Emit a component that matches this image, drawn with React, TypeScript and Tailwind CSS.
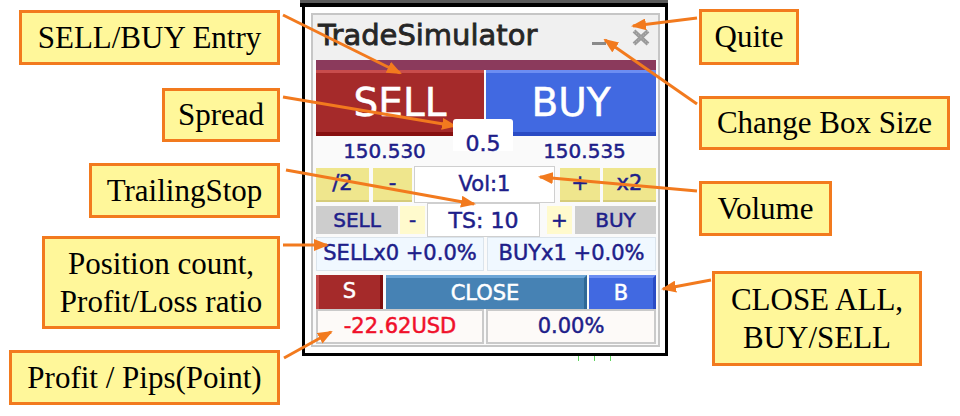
import React from 'react'

const navy = 'text-[#1e1e8a]'

interface Note {
  text: string[]
  box: string
}

const notes: Note[] = [
  { text: ['SELL/BUY Entry'], box: 'left-[19px] top-[10px] w-[261px] h-[55px]' },
  { text: ['Spread'], box: 'left-[162px] top-[88px] w-[118px] h-[54px]' },
  { text: ['TrailingStop'], box: 'left-[89px] top-[163px] w-[191px] h-[55px]' },
  { text: ['Position count,', 'Profit/Loss ratio'], box: 'left-[42px] top-[236px] w-[238px] h-[93px]' },
  { text: ['Profit / Pips(Point)'], box: 'left-[9px] top-[350px] w-[271px] h-[55px]' },
  { text: ['Quite'], box: 'left-[699px] top-[9px] w-[100px] h-[56px]' },
  { text: ['Change Box Size'], box: 'left-[699px] top-[96px] w-[251px] h-[54px]' },
  { text: ['Volume'], box: 'left-[699px] top-[181px] w-[133px] h-[55px]' },
  { text: ['CLOSE ALL,', 'BUY/SELL'], box: 'left-[712px] top-[271px] w-[210px] h-[95px]' },
]

// start x, start y, tip x, tip y
const arrows: number[][] = [
  [283, 15, 400, 73],
  [283, 97, 455, 126],
  [286, 170, 474, 204],
  [283, 245, 327, 245],
  [284, 358, 331, 332],
  [697, 18, 633, 26],
  [697, 104, 605, 40],
  [697, 191, 540, 177],
  [711, 280, 663, 289],
]

function Callout({ note }: { note: Note }) {
  return (
    <div
      className={`absolute ${note.box} border-[3px] border-[#f27a1e] bg-[#fff79a] flex flex-col items-center justify-center font-['Liberation_Serif',serif] text-[31px] leading-[38px] text-black`}
    >
      {note.text.map(t => (
        <div key={t} className="whitespace-nowrap">{t}</div>
      ))}
    </div>
  )
}

function Arrows() {
  return (
    <svg className="absolute left-0 top-0 pointer-events-none" width="960" height="416">
      <defs>
        <marker id="tip" markerUnits="userSpaceOnUse" markerWidth="15" markerHeight="12" refX="13" refY="6" orient="auto">
          <path d="M0,0 L15,6 L0,12 z" fill="#f27a1e" />
        </marker>
      </defs>
      {arrows.map(([x1, y1, x2, y2], i) => (
        <line key={i} x1={x1} y1={y1} x2={x2} y2={y2} stroke="#f27a1e" strokeWidth="3" markerEnd="url(#tip)" />
      ))}
    </svg>
  )
}

function Panel() {
  return (
    <div className="absolute left-[300px] top-0 w-[368px] h-[362px] font-['DejaVu_Sans',sans-serif] [-webkit-text-stroke:0.5px_currentColor]">
      <div className="h-[3px] bg-[#5a5a5a]" />
      <div className="h-[4px] bg-black" />
      <div className="ml-[2px] w-[366px] h-[349px] border-x-[3px] border-b-[3px] border-black bg-white pt-[6px] pl-[6px]">
        <div className="w-[349px] h-[334px] border-2 border-[#c6c6c6] bg-[#f0f0f0] flex flex-col">
          {/* title bar */}
          <div className="h-[45px] flex items-start pl-[5px] pr-[8px]">
            <span className="text-[29px] leading-[41px] text-[#262626] [-webkit-text-stroke:0.8px_currentColor]">TradeSimulator</span>
            <div className="ml-auto flex items-start gap-[26px] pt-[14px]">
              <div className="mt-[13px] w-[14px] h-[3px] bg-[#8a8a8a]" />
              <svg width="18" height="17" viewBox="0 0 18 17">
                <path d="M2,2 L16,15 M16,2 L2,15" stroke="#9a9a9a" strokeWidth="4" />
                <path d="M2,2 L16,15 M16,2 L2,15" stroke="#c4c4c4" strokeWidth="1" strokeDasharray="1 2" />
              </svg>
            </div>
          </div>

          {/* body */}
          <div className="flex-1 bg-[#fafafa] pl-[3px] pr-[2px] flex flex-col">
            <div className="h-[10px] bg-[#8b3a5c]" />
            <div className="h-[66px] flex gap-[2px]">
              <div className="w-[168px] bg-[#a52a2a] border-t-[3px] border-t-[#c84c4c] border-b-[4px] border-b-[#870f0f] flex items-center justify-center text-white text-[39px] leading-none">
                SELL
              </div>
              <div className="flex-1 bg-[#4169e1] border-t-[3px] border-t-[#6c8df2] border-b-[4px] border-b-[#2a4bc4] flex items-center justify-center text-white text-[39px] leading-none">
                BUY
              </div>
            </div>

            {/* prices + spread */}
            <div className={`h-[30px] flex text-[20px] leading-[30px] ${navy}`}>
              <div className="w-[137px] text-center">150.530</div>
              <div className="relative z-10 w-[60px] -mt-[17px] h-[32px] bg-white rounded-t-[3px] text-center text-[22px] leading-[22px] pt-[14px]">
                0.5
              </div>
              <div className="flex-1 text-center">150.535</div>
            </div>

            {/* volume */}
            <div className={`h-[37px] flex items-center text-[21px] ${navy}`}>
              <div className="w-[53px] h-[34px] bg-[#efe68d] border-b-2 border-[#d6cc7a] flex items-center justify-center">/2</div>
              <div className="ml-[4px] w-[39px] h-[34px] bg-[#efe68d] border-b-2 border-[#d6cc7a] flex items-center justify-center">-</div>
              <div className="ml-[2px] w-[141px] h-[37px] bg-white border border-[#cfcfcf] flex items-center justify-center">Vol:1</div>
              <div className="ml-[5px] w-[40px] h-[34px] bg-[#efe68d] border-b-2 border-[#d6cc7a] flex items-center justify-center">+</div>
              <div className="ml-[3px] flex-1 h-[34px] bg-[#efe68d] border-b-2 border-[#d6cc7a] flex items-center justify-center">x2</div>
            </div>

            {/* trailing stop */}
            <div className={`h-[34px] flex items-center text-[20px] ${navy}`}>
              <div className="w-[82px] h-[28px] bg-[#cdcdcd] flex items-center justify-center">SELL</div>
              <div className="ml-[2px] w-[25px] h-[28px] bg-[#fffacd] flex items-center justify-center">-</div>
              <div className="ml-[2px] w-[113px] h-[34px] bg-white border border-[#cfcfcf] flex items-center justify-center text-[22px]">TS: 10</div>
              <div className="ml-[7px] w-[25px] h-[28px] bg-[#fffacd] flex items-center justify-center">+</div>
              <div className="ml-[3px] flex-1 h-[28px] bg-[#cdcdcd] flex items-center justify-center">BUY</div>
            </div>

            {/* positions */}
            <div className={`h-[34px] flex gap-[3px] text-[21px] ${navy}`}>
              <div className="w-[168px] bg-[#f0f8ff] border border-[#dbe4ec] flex items-center justify-center whitespace-nowrap">SELLx0 +0.0%</div>
              <div className="flex-1 bg-[#f0f8ff] border border-[#dbe4ec] flex items-center justify-center whitespace-nowrap">BUYx1 +0.0%</div>
            </div>

            {/* close */}
            <div className="h-[38px] pt-[4px] flex text-white text-[21px]">
              <div className="w-[67px] bg-[#a52a2a] border-l-[3px] border-l-[#c44a4a] border-r-[3px] border-r-[#7e0e0e] flex items-center justify-center">S</div>
              <div className="ml-[3px] w-[201px] bg-[#4682b4] border-t-[3px] border-t-[#6ea6d6] border-r-[3px] border-r-[#2f6896] flex items-center justify-center">CLOSE</div>
              <div className="ml-[2px] flex-1 bg-[#4169e1] border-t-[3px] border-t-[#6c8df2] border-r-[3px] border-r-[#2a4bc4] flex items-center justify-center">B</div>
            </div>

            {/* profit */}
            <div className="h-[35px] flex gap-[2px] text-[21px]">
              <div className="w-[168px] bg-[#fdfaf8] border-2 border-[#cacaca] flex items-center justify-center text-[#f0102a]">-22.62USD</div>
              <div className={`flex-1 bg-[#fdfaf8] border-2 border-[#cacaca] flex items-center justify-center ${navy}`}>0.00%</div>
            </div>
          </div>
        </div>
      </div>
      <div className="flex gap-[15px] pl-[278px]">
        <div className="w-px h-[5px] bg-[#5fd45f]" />
        <div className="w-px h-[5px] bg-[#5fd45f]" />
        <div className="w-px h-[5px] bg-[#5fd45f]" />
      </div>
    </div>
  )
}

export default function App() {
  return (
    <div className="relative w-[960px] h-[416px] bg-white overflow-hidden">
      <Panel />
      {notes.map(n => (
        <Callout key={n.text[0]} note={n} />
      ))}
      <Arrows />
    </div>
  )
}
